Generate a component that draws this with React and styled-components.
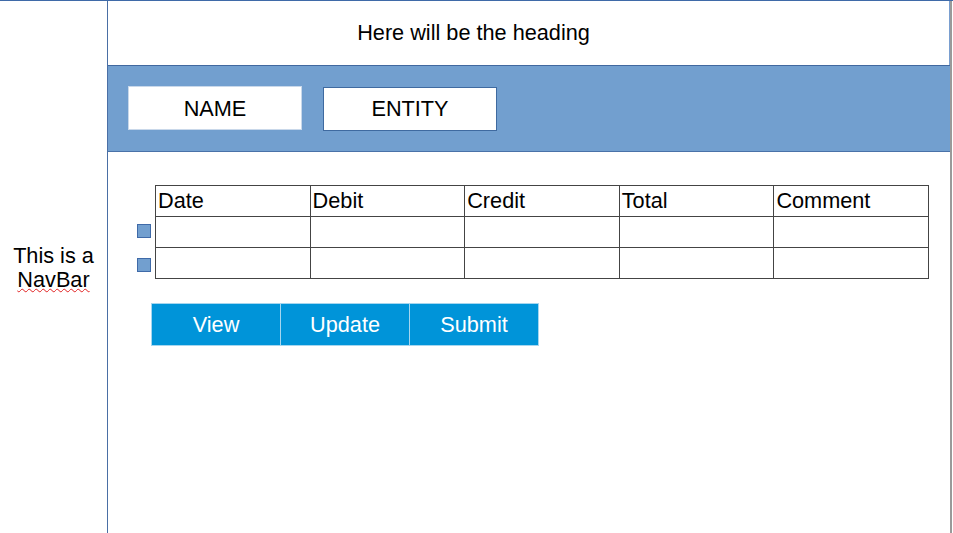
import styled, { createGlobalStyle } from "styled-components";

const GlobalStyle = createGlobalStyle`
  body {
    margin: 0;
    font-family: "Liberation Sans", Arial, sans-serif;
    background: #fff;
  }
`;

const columns = ["Date", "Debit", "Credit", "Total", "Comment"];
const rows = [0, 1];
const actions = ["View", "Update", "Submit"];

const App = () => {
  return (
    <>
      <GlobalStyle />
      <Page>
        <NavBar>
          <NavText>
            This is a <Squiggle>NavBar</Squiggle>
          </NavText>
        </NavBar>
        <Main>
          <Heading>Here will be the heading</Heading>
          <FilterBar>
            <FilterBox $light>NAME</FilterBox>
            <FilterBox>ENTITY</FilterBox>
          </FilterBar>
          <Content>
            <TableArea>
              <Markers>
                {rows.map((r) => (
                  <Marker key={r} />
                ))}
              </Markers>
              <Table>
                <thead>
                  <tr>
                    {columns.map((c) => (
                      <Th key={c}>{c}</Th>
                    ))}
                  </tr>
                </thead>
                <tbody>
                  {rows.map((r) => (
                    <tr key={r}>
                      {columns.map((c) => (
                        <Td key={c} />
                      ))}
                    </tr>
                  ))}
                </tbody>
              </Table>
            </TableArea>
            <ButtonRow>
              {actions.map((a) => (
                <ActionButton key={a}>{a}</ActionButton>
              ))}
            </ButtonRow>
          </Content>
        </Main>
        <Edge />
      </Page>
    </>
  );
};

const Page = styled.div`
  display: flex;
  height: 533px;
  width: 953px;
  border-top: 1px solid #3f6aa8;
  box-sizing: border-box;
  overflow: hidden;
`;
const NavBar = styled.nav`
  width: 108px;
  border-right: 1px solid #4a6fa5;
  display: flex;
  align-items: flex-start;
  justify-content: center;
  padding-top: 243px;
  box-sizing: border-box;
  flex-shrink: 0;
`;
const NavText = styled.div`
  font-size: 21.7px;
  line-height: 24px;
  text-align: center;
  color: #000;
`;
const Squiggle = styled.span`
  text-decoration: underline wavy #e02020;
  text-decoration-thickness: 1px;
  text-underline-offset: 1px;
`;
const Main = styled.main`
  width: 842px;
  display: flex;
  flex-direction: column;
`;
const Heading = styled.h1`
  margin: 0;
  height: 64px;
  box-sizing: border-box;
  border-right: 1px solid #7a9fd0;
  font-size: 21.7px;
  font-weight: normal;
  display: flex;
  align-items: center;
  justify-content: center;
  padding-right: 110px;
  color: #000;
`;
const FilterBar = styled.div`
  height: 87px;
  box-sizing: border-box;
  background: #729fcf;
  border-top: 1px solid #41689f;
  border-bottom: 1px solid #4a72a8;
  display: flex;
  align-items: flex-start;
  gap: 21px;
  padding: 20px 20px 0;
`;
const FilterBox = styled.div`
  width: 174px;
  height: 44px;
  margin-top: ${(p) => (p.$light ? "0" : "1px")};
  padding-top: ${(p) => (p.$light ? "2px" : "0")};
  box-sizing: border-box;
  background: #fff;
  border: 1px solid ${(p) => (p.$light ? "#c9d8ea" : "#3f6aa0")};
  display: flex;
  align-items: center;
  justify-content: center;
  font-size: 21.7px;
  color: #000;
`;
const Content = styled.section`
  display: flex;
  flex-direction: column;
  padding: 33px 0 0 29px;
`;
const TableArea = styled.div`
  display: flex;
  align-items: flex-start;
  gap: 4px;
`;
const Markers = styled.div`
  display: flex;
  flex-direction: column;
  gap: 20px;
  padding-top: 39px;
`;
const Marker = styled.span`
  width: 14px;
  height: 14px;
  box-sizing: border-box;
  background: #729fcf;
  border: 1px solid #3f6aa8;
`;
const Table = styled.table`
  border-collapse: collapse;
  width: 774px;
  table-layout: fixed;
`;
const Th = styled.th`
  height: 30px;
  padding: 0 0 0 2px;
  border: 1px solid #444;
  font-size: 21.7px;
  font-weight: normal;
  text-align: left;
  color: #000;
`;
const Td = styled.td`
  height: 30px;
  padding: 0;
  border: 1px solid #444;
`;
const ButtonRow = styled.div`
  display: flex;
  margin: 24px 0 0 14px;
`;
const ActionButton = styled.button`
  width: 130px;
  height: 43px;
  box-sizing: border-box;
  background: #0094d9;
  border: 1px solid #a5d6ef;
  color: #fff;
  font-family: "Liberation Sans", Arial, sans-serif;
  font-size: 21.7px;
  cursor: pointer;
  & + & {
    margin-left: -1px;
  }
`;
const Edge = styled.div`
  width: 2px;
  background: #9a9a9a;
  flex-shrink: 0;
`;

export default App;
